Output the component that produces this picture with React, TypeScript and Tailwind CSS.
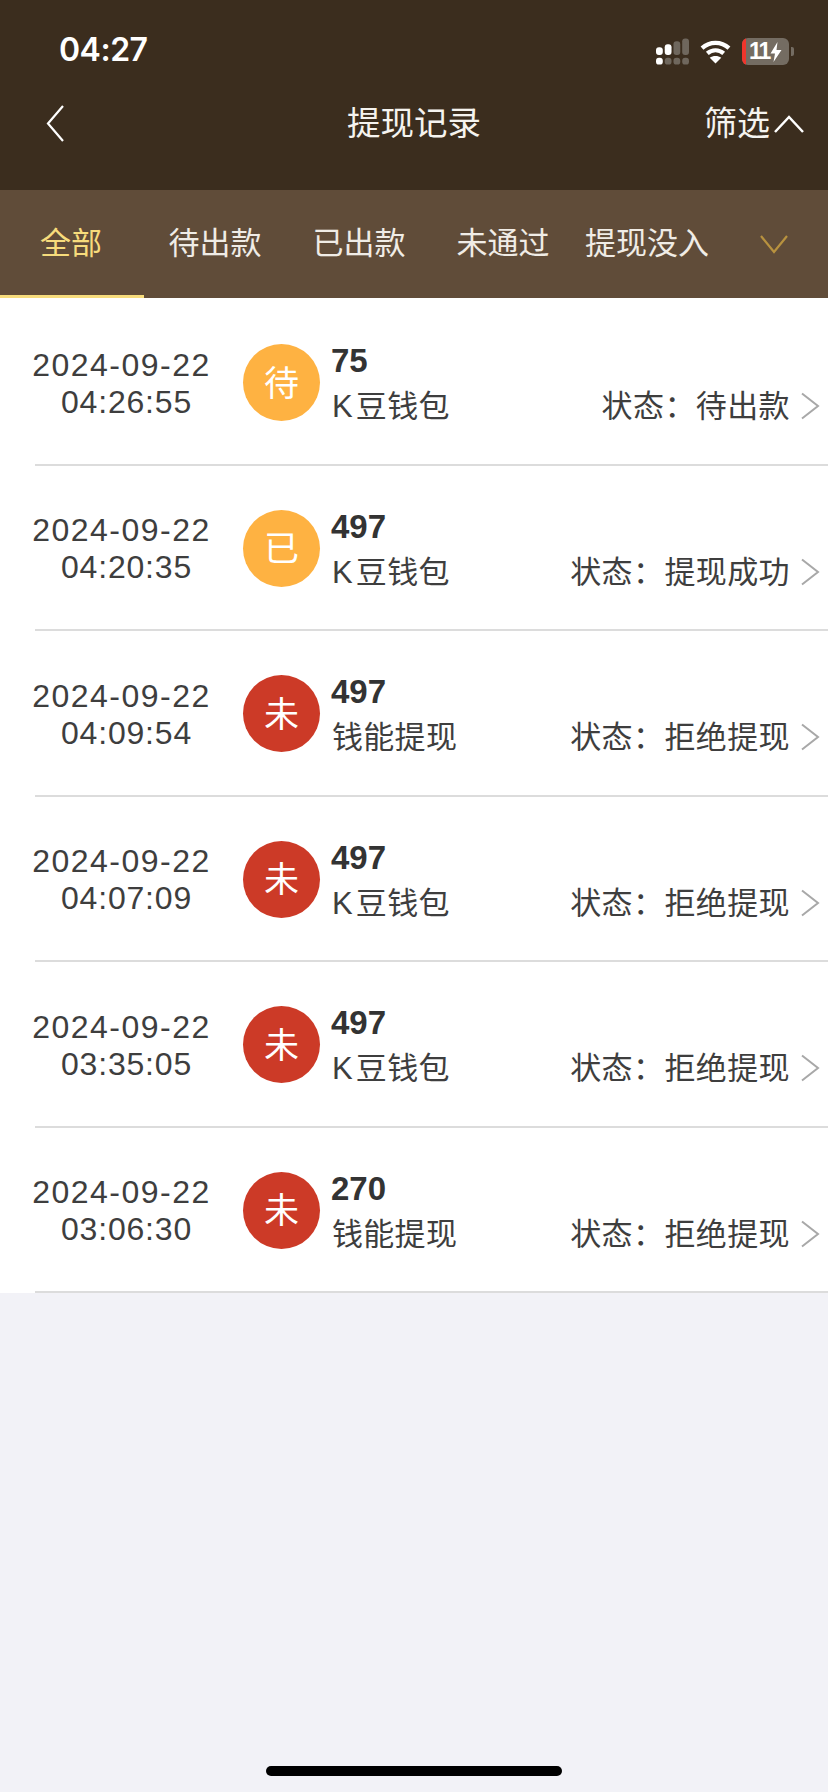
const FONT_CLASS = "font-['Liberation_Sans','Noto_Sans_CJK_SC',sans-serif]"

const tabs = ['全部', '待出款', '已出款', '未通过', '提现没入']

const records = [
  { date: '2024-09-22', time: '04:26:55', badge: '待', tone: 'bg-[#feb242]', amount: '75', source: 'K\u200a豆钱包', status: '待出款' },
  { date: '2024-09-22', time: '04:20:35', badge: '已', tone: 'bg-[#feb242]', amount: '497', source: 'K\u200a豆钱包', status: '提现成功' },
  { date: '2024-09-22', time: '04:09:54', badge: '未', tone: 'bg-[#cc3a27]', amount: '497', source: '钱能提现', status: '拒绝提现' },
  { date: '2024-09-22', time: '04:07:09', badge: '未', tone: 'bg-[#cc3a27]', amount: '497', source: 'K\u200a豆钱包', status: '拒绝提现' },
  { date: '2024-09-22', time: '03:35:05', badge: '未', tone: 'bg-[#cc3a27]', amount: '497', source: 'K\u200a豆钱包', status: '拒绝提现' },
  { date: '2024-09-22', time: '03:06:30', badge: '未', tone: 'bg-[#cc3a27]', amount: '270', source: '钱能提现', status: '拒绝提现' },
]

function SignalIcon() {
  return (
    <svg width="33" height="27" viewBox="0 0 34 27">
      <rect x="0" y="9" width="7" height="8" rx="3" fill="#fff" />
      <rect x="9" y="6" width="7" height="11" rx="3" fill="#fff" />
      <rect x="18" y="3" width="7" height="14" rx="3" fill="#6f675d" />
      <rect x="27" y="0" width="7" height="17" rx="3" fill="#6f675d" />
      <rect x="0" y="20" width="7" height="7" rx="3" fill="#fff" />
      <rect x="9" y="20" width="7" height="7" rx="3" fill="#6f675d" />
      <rect x="18" y="20" width="7" height="7" rx="3" fill="#6f675d" />
      <rect x="27" y="20" width="7" height="7" rx="3" fill="#6f675d" />
    </svg>
  )
}

function WifiIcon() {
  return (
    <svg width="31" height="25" viewBox="0 0 32 26" fill="none" stroke="#fff" strokeWidth="4.4">
      <path d="M2 9.5C10 2.2 22 2.2 30 9.5" />
      <path d="M7.5 15C12.5 10.6 19.5 10.6 24.5 15" />
      <path d="M16 25.5l-6-6c3.4-2.4 8.6-2.4 12 0z" fill="#fff" stroke="none" />
    </svg>
  )
}

function BatteryIcon() {
  return (
    <div className="flex items-center gap-[2px]">
      <div className="flex h-[27px] w-[47px] items-center overflow-hidden rounded-[6px] bg-[#746c62]">
        <div className="h-full w-[4px] bg-[#f0352c]" />
        <span className="ml-[3px] text-[23px] font-bold leading-none tracking-[-2px] text-white">11</span>
        <svg width="12" height="20" viewBox="0 0 12 20" className="ml-[1px]">
          <path d="M7.5 0L0.5 11.5H5L3.5 20L11.5 8H6.5z" fill="#fff" />
        </svg>
      </div>
      <div className="h-[9px] w-[3px] rounded-r-[2px] bg-[#746c62]" />
    </div>
  )
}

function RecordRow({ record }: { record: (typeof records)[number] }) {
  return (
    <div className="flex h-[165.5px] flex-col">
      <div className="flex flex-1 items-center pt-[2px]">
        <div className="w-[243px] pt-[2px] text-center text-[32px] leading-[37px] tracking-[1.5px] text-[#3e3e3e]">
          <div>{record.date}</div>
          <div className="pl-[10px] tracking-[0.8px]">{record.time}</div>
        </div>
        <div className={`flex h-[77px] w-[77px] shrink-0 items-center justify-center rounded-full pt-[2px] text-[35px] text-white ${record.tone}`}>
          {record.badge}
        </div>
        <div className="ml-[11px] flex-1 pt-[4px]">
          <div className="text-[33px] font-bold leading-[38px] text-[#333]">{record.amount}</div>
          <div className="mt-[7px] flex items-center justify-between text-[31px] leading-[40px] text-[#3e3e3e]">
            <span className="ml-[1px] tracking-[0.3px]">{record.source}</span>
            <div className="flex items-center">
              <span className="tracking-[0.4px]">状态：{record.status}</span>
              <svg width="20" height="28" viewBox="0 0 20 28" fill="none" stroke="#a8a8a8" strokeWidth="2" className="mb-[2px] ml-[10px] mr-[8px]">
                <path d="M2 1.5L18 14L2 26.5" />
              </svg>
            </div>
          </div>
        </div>
      </div>
      <div className="ml-[35px] h-[2px] bg-[#dcdcdc]" />
    </div>
  )
}

export default function App() {
  return (
    <div className={`flex h-[1792px] w-[828px] flex-col overflow-hidden bg-[#f2f2f7] ${FONT_CLASS}`}>
      {/* Status bar + title */}
      <header className="h-[190px] bg-[#3b2d1e] text-white">
        <div className="flex h-[80px] items-end justify-between pb-[11px] pl-[59px] pr-[34px]">
          <span className="relative top-[1px] font-['Inter',sans-serif] text-[32px] font-semibold leading-[40px] tracking-[-0.5px]">04:27</span>
          <div className="flex items-center gap-[11px] pb-[4px]">
            <SignalIcon />
            <WifiIcon />
            <BatteryIcon />
          </div>
        </div>
        <div className="flex h-[88px] items-center justify-between pl-[46px] pr-[24px]">
          <svg width="19" height="38" viewBox="0 0 19 38" fill="none" stroke="#fff" strokeWidth="2.2">
            <path d="M17 1L2 18.5L17 36" />
          </svg>
          <span className="ml-[59px] text-[33.5px] text-[#f5f3ef]">提现记录</span>
          <div className="flex items-center gap-[4px]">
            <span className="text-[33px] text-[#f5f3ef]">筛选</span>
            <svg width="30" height="18" viewBox="0 0 30 18" fill="none" stroke="#fff" strokeWidth="2.5">
              <path d="M1 17L15 2L29 17" />
            </svg>
          </div>
        </div>
      </header>

      {/* Tabs */}
      <nav className="flex h-[108px] items-stretch bg-[#604c39]">
        {tabs.map((tab, idx) => (
          <div
            key={tab}
            className={`flex w-[144px] items-center justify-center border-b-[3px] pr-[2px] pt-[4px] text-[31px] ${idx === 0 ? 'border-[#f7dc7c] text-[#f7dc7c]' : 'border-transparent text-[#f0ece6]'}`}
          >
            {tab}
          </div>
        ))}
        <div className="flex flex-1 items-center justify-center">
          <svg width="28" height="20" viewBox="0 0 28 20" fill="none" stroke="#b8923f" strokeWidth="2.2">
            <path d="M1 2L14 18L27 2" />
          </svg>
        </div>
      </nav>

      {/* Records */}
      <main className="bg-white pt-[2px]">
        {records.map((record) => (
          <RecordRow key={record.time} record={record} />
        ))}
      </main>

      {/* Home indicator */}
      <div className="mt-auto flex justify-center pb-[16px]">
        <div className="h-[10px] w-[296px] rounded-full bg-black" />
      </div>
    </div>
  )
}
